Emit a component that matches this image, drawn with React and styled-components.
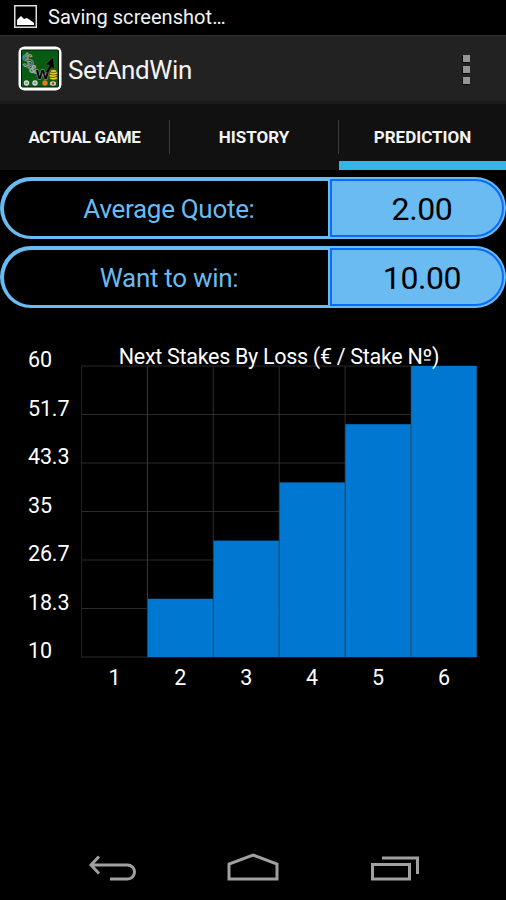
import styled, { createGlobalStyle } from 'styled-components';

const GlobalStyle = createGlobalStyle`
    html, body {
        margin: 0;
        padding: 0;
        background: #000;
    }

    * {
        box-sizing: border-box;
    }
`;

const Screen = styled.div`
    display: flex;
    flex-direction: column;
    width: 506px;
    height: 900px;
    overflow: hidden;
    background: #000;
    color: #f3f3f3;
    font-family: Roboto, "Liberation Sans", sans-serif;
`;

const StatusBar = styled.div`
    display: flex;
    align-items: center;
    height: 35px;
    padding: 0 0 2px 14px;
    gap: 11px;
`;

const StatusText = styled.span`
    font-size: 20px;
    line-height: 24px;
    letter-spacing: 0.05px;
`;

const ActionBar = styled.header`
    display: flex;
    align-items: center;
    height: 69px;
    padding: 0 36px 0 18px;
    background: #222;
    border-top: 1px solid #303030;
    border-bottom: 3px solid #1a1a1a;
`;

const AppTitle = styled.h1`
    flex: 1;
    margin: 2px 0 0 6px;
    font-size: 26px;
    font-weight: 400;
    letter-spacing: -0.4px;
    line-height: 32px;
`;

const OverflowMenu = styled.div`
    display: flex;
    flex-direction: column;
    gap: 4px;
    margin-top: 2px;
`;

const OverflowDot = styled.span`
    width: 7px;
    height: 7px;
    background: #969696;
    box-shadow: -1px 1px 0 #080808;
`;

const Tabs = styled.nav`
    display: grid;
    grid-template-columns: 169px 170px 167px;
    height: 66px;
    background: #111;
`;

const Tab = styled.div`
    display: flex;
    align-items: center;
    justify-content: center;
    border-bottom: ${({$active}) => ($active ? '9px solid #33b5e5' : '0')};
    padding-top: ${({$active}) => ($active ? '9px' : '0')};
    font-size: 17px;
    font-weight: 700;
    letter-spacing: ${({$spacing}) => $spacing || '0'};
`;

const TabLabel = styled.span`
    flex: 1;
    text-align: center;
`;

const TabDivider = styled.span`
    width: 1px;
    height: 34px;
    margin-top: -1px;
    background: #3b3b3b;
`;

const Fields = styled.section`
    display: flex;
    flex-direction: column;
    gap: 7px;
    padding-top: 7px;
`;

const Field = styled.div`
    display: flex;
    height: 62px;
    border-radius: 32px;
    overflow: hidden;
    background: #69bbf2;
`;

const FieldLabel = styled.div`
    width: 324px;
    height: 55px;
    margin: 4px 0 3px 4px;
    padding-left: 6px;
    border-radius: 28px 0 0 28px;
    background: #000;
    color: #69bbf2;
    font-size: 26px;
    letter-spacing: -0.3px;
    line-height: 56px;
    text-align: center;
`;

const FieldValue = styled.div`
    flex: 1;
    margin: 2px;
    padding-left: 10px;
    border: 2px solid #0a6cff;
    border-radius: 0 29px 29px 0;
    color: #000;
    font-size: 32px;
    letter-spacing: -0.4px;
    line-height: 56px;
    text-align: center;
`;

const Chart = styled.svg`
    display: block;
    flex: 1;
    width: 506px;
    min-height: 0;
`;

const ChartText = styled.text`
    fill: #fff;
    font-size: 21.5px;
    letter-spacing: ${({$spacing}) => $spacing || '0'};
`;

const NavBar = styled.footer`
    display: flex;
    height: 60px;
`;

const stakes = [10, 20, 30, 40, 50, 60];
const ticks = ['60', '51.7', '43.3', '35', '26.7', '18.3', '10'];
const fields = [
    {label: 'Average Quote:', value: '2.00'},
    {label: 'Want to win:', value: '10.00'},
];

const left = 81.5;
const top = 58.5;
const colWidth = 65.9;
const chartHeight = 291;

const PictureIcon = () => (
    <svg width="23" height="23" viewBox="0 0 23 23">
        <rect x="0.75" y="0.75" width="21.5" height="21.5" fill="none" stroke="#ddd" strokeWidth="1.5" />
        <path d="M3 20v-5l2-2 2-2 3 3 3-1 3 2 4 3v2z" fill="#fff" />
    </svg>
);

const AppLogo = () => (
    <svg width="44" height="45" viewBox="0 0 44 45">
        <rect x="0.5" y="0.5" width="43" height="44" rx="6" fill="#fff" />
        <rect x="3.5" y="4" width="37" height="37" rx="1" fill="#075b12" stroke="#001d04" />
        <g fontFamily="Liberation Sans, sans-serif" fill="#06350b" stroke="#a5aaa5" strokeWidth="0.8">
            <text x="4.5" y="21" fontSize="19" transform="rotate(-8 10 14)">$</text>
            <text x="12" y="27" fontSize="11" transform="rotate(15 16 22)">&amp;</text>
        </g>
        <text x="18" y="33" fontFamily="Liberation Sans, sans-serif" fontSize="17" fontWeight="700" fill="#000" stroke="#aaa" strokeWidth="1" paintOrder="stroke">w</text>
        <path d="M27.5 26L31.5 19.5l-4-1L35.5 11l.8 12.5-2.6-2.2-3.5 6z" fill="#000" stroke="#718671" strokeWidth="0.4" />
        <g fill="#e7d522" stroke="#463d00" strokeWidth="0.8">
            <ellipse cx="35.5" cy="32" rx="4" ry="2" />
            <ellipse cx="35" cy="29.5" rx="4" ry="2" />
            <ellipse cx="35.5" cy="27" rx="4" ry="2" />
            <ellipse cx="35.5" cy="25" rx="3.5" ry="1.5" />
        </g>
        <circle cx="8.5" cy="37" r="2.7" fill="#ddd" />
        <circle cx="17" cy="37" r="2.7" fill="#ddd" />
        <circle cx="27" cy="37" r="2.7" fill="#e87524" />
        <ellipse cx="35" cy="37.5" rx="3" ry="2.2" fill="#e4d6cc" />
        <path d="M7 36l3 2M10 36l-3 2M15.5 37h3M17 35.5v3" stroke="#777" strokeWidth="0.8" />
        <circle cx="35" cy="37.5" r="1.3" fill="#c02a1e" />
    </svg>
);

const StakesChart = () => (
    <Chart viewBox="0 308 506 532">
        <g transform="translate(0 308)">
            <g stroke="#2b2b2b" strokeWidth="1">
                {ticks.map((tick, i) => (
                    <line key={tick} x1={left} x2={left + colWidth * 6} y1={top + i * 48.5 - 0.5} y2={top + i * 48.5 - 0.5} />
                ))}
            </g>
            {stakes.map((stake, i) => {
                const height = ((stake - 10) / 50) * chartHeight;
                return (
                    <rect key={stake} x={left + i * colWidth} y={top + chartHeight - height - 0.5} width={colWidth} height={height} fill="#0077d0" />
                );
            })}
            <g stroke="#3c3c3c" strokeWidth="1">
                {[0, 1, 2, 3, 4, 5, 6].map((i) => (
                    <line
                        key={i}
                        x1={left + i * colWidth}
                        x2={left + i * colWidth}
                        y1={top}
                        y2={top + chartHeight}
                        stroke={i === 0 ? '#222' : undefined}
                        opacity={i > 1 ? 0.8 : 1}
                    />
                ))}
            </g>
            {stakes.map((stake, i) => (
                <ChartText key={stake} x={left + (i + 0.5) * colWidth} y={377} textAnchor="middle">{i + 1}</ChartText>
            ))}
            {ticks.map((tick, i) => (
                <ChartText key={tick} x={28} y={59 + i * 48.5} $spacing="-0.15px">{tick}</ChartText>
            ))}
            <ChartText x={279} y={56} textAnchor="middle" $spacing="-0.3px">Next Stakes By Loss (€ / Stake Nº)</ChartText>
            {/* underline of the ordinal sign */}
            <line x1={424} x2={430.5} y1={52} y2={52} stroke="#fff" strokeWidth="1.3" />
        </g>
    </Chart>
);

const NavIcons = () => (
    <svg width="506" height="60" viewBox="0 0 506 60" fill="none" stroke="#a0a0a0" strokeWidth="3">
        <path d="M99 16.5l-8 8.5 8 8.5M91 25h36.500a7 7 0 0 1 0 14h-17.500" />
        <path d="M229 39V24l24-9 24 9v15z" />
        <path d="M372.5 24.500h37v14.500h-37zM382 18h35.500v16" />
    </svg>
);

const App = () => {
    return (<>
        <GlobalStyle />
        <Screen>
            <StatusBar>
                <PictureIcon />
                <StatusText>Saving screenshot…</StatusText>
            </StatusBar>
            <ActionBar>
                <AppLogo />
                <AppTitle>SetAndWin</AppTitle>
                <OverflowMenu>
                    <OverflowDot />
                    <OverflowDot />
                    <OverflowDot />
                </OverflowMenu>
            </ActionBar>
            <Tabs>
                <Tab $spacing="-0.35px"><TabLabel>ACTUAL GAME</TabLabel></Tab>
                <Tab><TabDivider /><TabLabel>HISTORY</TabLabel><TabDivider /></Tab>
                <Tab $active><TabLabel>PREDICTION</TabLabel></Tab>
            </Tabs>
            <Fields>
                {fields.map(({label, value}) => (
                    <Field key={label}>
                        <FieldLabel>{label}</FieldLabel>
                        <FieldValue>{value}</FieldValue>
                    </Field>
                ))}
            </Fields>
            <StakesChart />
            <NavBar>
                <NavIcons />
            </NavBar>
        </Screen>
    </>);
};
export default App;
